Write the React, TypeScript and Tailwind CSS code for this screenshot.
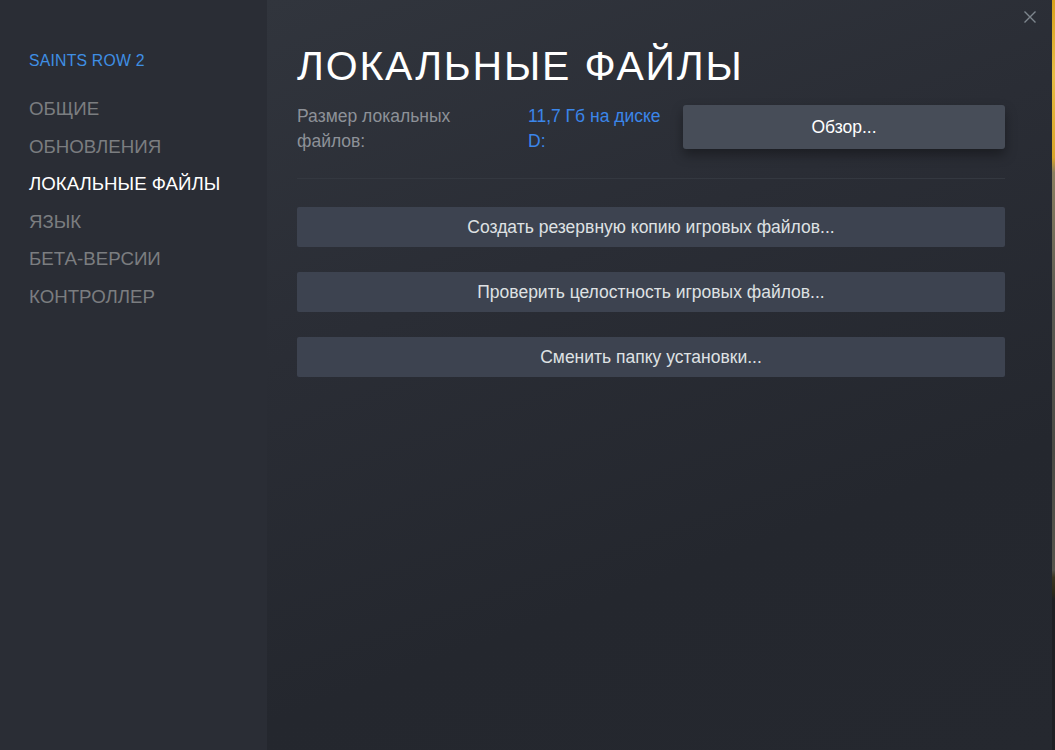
import React from "react";

const navItems = [
  { label: "ОБЩИЕ", active: false },
  { label: "ОБНОВЛЕНИЯ", active: false },
  { label: "ЛОКАЛЬНЫЕ ФАЙЛЫ", active: true },
  { label: "ЯЗЫК", active: false },
  { label: "БЕТА-ВЕРСИИ", active: false },
  { label: "КОНТРОЛЛЕР", active: false },
];

const actions = [
  "Создать резервную копию игровых файлов...",
  "Проверить целостность игровых файлов...",
  "Сменить папку установки...",
];

function CloseIcon() {
  return (
    <svg width="14" height="14" viewBox="0 0 14 14" fill="none">
      <path d="M1.5 1.5 L12.5 12.5 M12.5 1.5 L1.5 12.5" stroke="#7e868e" strokeWidth="1.4" />
    </svg>
  );
}

export default function App() {
  return (
    <div
      className="flex h-[750px] w-[1055px] overflow-hidden"
      style={{ fontFamily: '"Liberation Sans", Arial, sans-serif' }}
    >
      {/* Sidebar */}
      <aside className="flex w-[267px] shrink-0 flex-col bg-[#2a2d35] pl-[29px] pt-[50px]">
        <div className="text-[15.8px] leading-[22px] tracking-[0.2px] text-[#3f8fe4]">SAINTS ROW 2</div>
        <nav className="mt-[18px] flex flex-col">
          {navItems.map((item) => (
            <div
              key={item.label}
              className={
                item.active
                  ? "text-[18.7px] leading-[37.6px] text-white"
                  : "text-[18.7px] leading-[37.6px] text-[#7b7d80]"
              }
            >
              {item.label}
            </div>
          ))}
        </nav>
      </aside>

      {/* Main pane */}
      <main className="relative flex flex-1 flex-col bg-[linear-gradient(160deg,#31353d_0%,#2a2d35_35%,#24272e_70%,#25282f_100%)] pl-[30px] pr-[47px] pt-[42px]">
        <button className="absolute right-[14px] top-[9px] flex h-[16px] w-[16px] items-center justify-center">
          <CloseIcon />
        </button>

        <h1 className="text-[41px] font-normal leading-[48px] tracking-[1.8px] text-white">
          ЛОКАЛЬНЫЕ ФАЙЛЫ
        </h1>

        <div className="mt-[14px] flex items-start">
          <div className="w-[231px] pr-[50px] text-[17.5px] leading-[25px] text-[#8d9198]">
            Размер локальных файлов:
          </div>
          <div className="w-[148px] text-[17.5px] leading-[25px] text-[#3b86ea]">11,7 Гб на диске D:</div>
          <button className="ml-auto mt-[1px] h-[44px] w-[322px] rounded-[3px] bg-[#474d58] text-[17.5px] text-white shadow-[0_6px_12px_rgba(0,0,0,0.35)]">
            Обзор...
          </button>
        </div>

        <div className="mt-[24px] h-px bg-[#343840]" />

        <div className="mt-[28px] flex flex-col gap-[25px]">
          {actions.map((label) => (
            <button
              key={label}
              className="h-[40px] w-full rounded-[2px] bg-[#3d4350] text-[17.5px] text-[#dfe1e3]"
            >
              {label}
            </button>
          ))}
        </div>
      </main>

      {/* Edge of the window behind the dialog */}
      <div className="w-[3px] shrink-0 bg-[linear-gradient(180deg,#d8a21c_0%,#e6bd45_10%,#d9a62a_21%,#8a8060_23%,#5a5a52_40%,#4a4a44_60%,#55544c_76%,#3a3420_77%,#2b2818_79%,#1e1f23_80%,#1e1f23_100%)]" />
    </div>
  );
}
